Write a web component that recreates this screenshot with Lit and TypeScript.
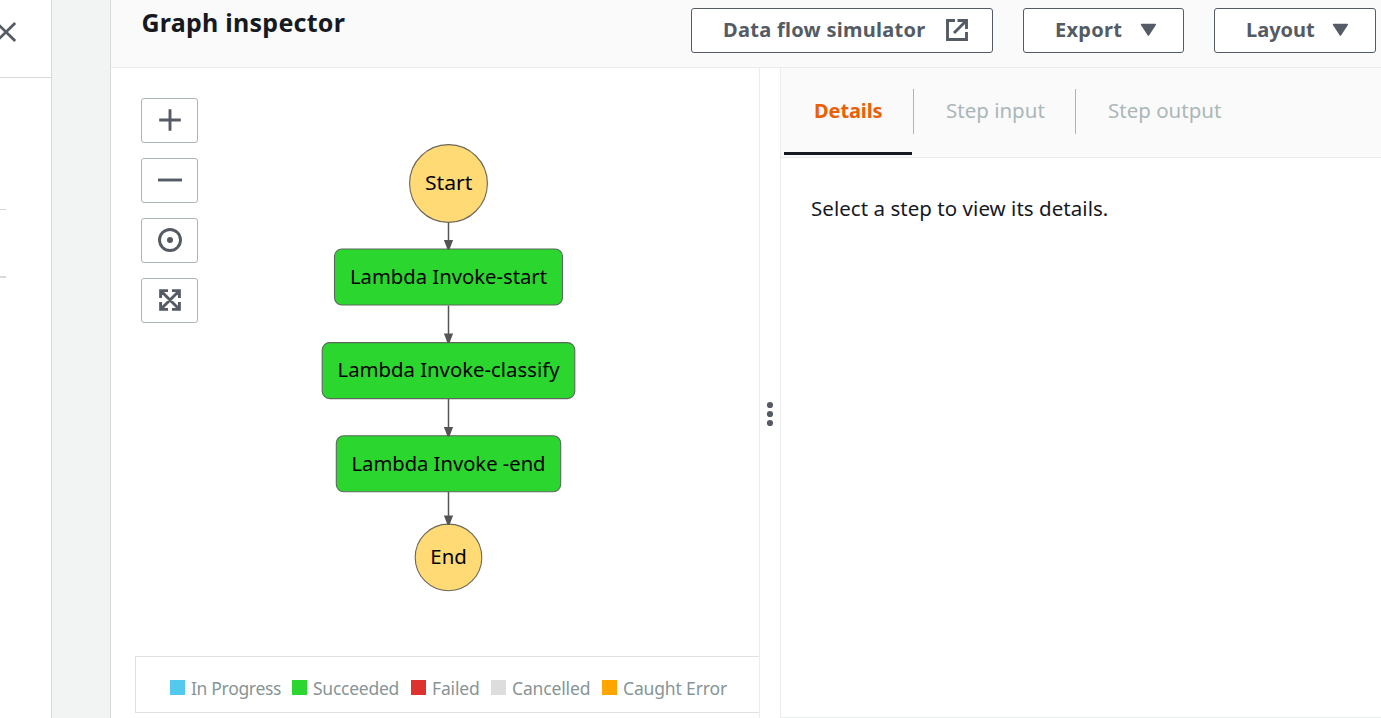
import { LitElement, html, css, svg } from "lit";
import { customElement } from "lit/decorators.js";

interface StepNode { label: string; x: number; y: number; w: number; tx: number; ty: number; tw: number }

const STEPS: StepNode[] = [
  { label: "Lambda Invoke-start", x: 334.5, y: 249, w: 228, tx: 350, ty: 284, tw: 197 },
  { label: "Lambda Invoke-classify", x: 322.2, y: 342.6, w: 252.6, tx: 337.5, ty: 377, tw: 222 },
  { label: "Lambda Invoke -end", x: 336.3, y: 435.8, w: 224.4, tx: 351.5, ty: 471, tw: 194 },
];

const LINKS = [[222.5, 249], [305.5, 342.6], [399, 436], [492, 524.5]];

const LEGEND = [
  { label: "In Progress", cls: "progress" },
  { label: "Succeeded", cls: "ok" },
  { label: "Failed", cls: "failed" },
  { label: "Cancelled", cls: "cancelled" },
  { label: "Caught Error", cls: "caught" },
];

@customElement("state-graph")
class StateGraph extends LitElement {
  static styles = css`
    :host { display: block; }
    svg { display: block; }
    .terminal { fill: #ffda75; stroke: #6b6759; stroke-width: 1.1; }
    .step { fill: #2bd62e; stroke: #5c685c; stroke-width: 1.1; }
    .link { stroke: #545454; stroke-width: 1.5; }
    .head { fill: #545454; }
    text { font: 20.5px "Noto Sans", sans-serif; fill: #000; }
  `;
  render() {
    return html`<svg width="480" height="480" viewBox="210 130 480 480">
      ${LINKS.map(([a, b]) => svg`
        <line class="link" x1="448.5" x2="448.5" y1=${a} y2=${b - 6}></line>`)}
      <circle class="terminal" cx="448.5" cy="183.5" r="38.9"></circle>
      <text x="425" y="190" textLength="47.5" lengthAdjust="spacingAndGlyphs">Start</text>
      ${STEPS.map((s) => svg`
        <rect class="step" x=${s.x} y=${s.y} width=${s.w} height="56" rx="7.5"></rect>
        <text x=${s.tx} y=${s.ty} textLength=${s.tw} lengthAdjust="spacingAndGlyphs">${s.label}</text>`)}
      <circle class="terminal" cx="448.5" cy="557.4" r="33.3"></circle>
      <text x="430.3" y="564" textLength="36.5" lengthAdjust="spacingAndGlyphs">End</text>
      ${LINKS.map(([, b]) => svg`
        <path class="head" d="M443.9 ${b - 9}h9.2l-3.6 9.4h-2z"></path>`)}
    </svg>`;
  }
}

@customElement("app-root")
class AppRoot extends LitElement {
  static styles = css`
    :host {
      display: flex; width: 100%; height: 718px; overflow: hidden; background: #fff;
      font-family: "Noto Sans", sans-serif; color: #16191f; white-space: nowrap;
    }
    * { box-sizing: border-box; }
    svg { display: block; flex: none; }
    .side { width: 52px; border-right: 1px solid #d5dbdb; flex: none; }
    .side-head { height: 78px; border-bottom: 1px solid #d5dbdb; padding-top: 22px; }
    .rule { width: 6px; height: 1px; background: #d5dbdb; margin-top: 131px; }
    .rule.thick { height: 2px; margin-top: 66px; }
    .gutter { width: 58px; background: #f2f3f3; flex: none; }
    .panel { flex: 1; min-width: 0; border-left: 1px solid #d5dbdb; display: flex; flex-direction: column; }
    .head {
      height: 68px; flex: none; background: #fafafa; border-bottom: 1px solid #eaeded;
      display: flex; align-items: flex-start; padding: 8px 5px 0 30.5px;
    }
    h2 { margin: -5px 0 0; font-size: 25px; line-height: 38px; font-weight: 700; letter-spacing: 0.25px; flex: 1; }
    .btn {
      height: 45px; border: 1px solid #545b64; border-radius: 3px; background: #fff; color: #545b64;
      display: flex; align-items: center; font-size: 20px; font-weight: 700; line-height: 30px;
      justify-content: space-between; padding: 0 24px 1px 31px; flex: none;
    }
    .sim { width: 302px; letter-spacing: 0.28px; }
    .exp { width: 161px; margin-left: 30px; padding-right: 26px; letter-spacing: 0.3px; }
    .lay { width: 162px; margin-left: 30px; padding-right: 26px; }
    .body { flex: 1; display: flex; min-height: 0; }
    .canvas {
      width: 649px; flex: none; border-right: 1px solid #eaeded;
      display: flex; flex-direction: column; justify-content: space-between; padding: 30px 0 5px 24px;
    }
    .work { display: flex; padding-left: 6px; }
    .tools { display: flex; flex-direction: column; gap: 15px; width: 57px; }
    .tool {
      width: 57px; height: 45px; border: 1px solid #aab7b8; border-radius: 3px;
      display: flex; align-items: center; justify-content: center; padding-bottom: 1px;
    }
    .graph { padding: 32px 0 0 12px; }
    .legend {
      height: 57px; border: 1px solid #e0e0e0; border-right: 0; padding: 7px 0 0 34px;
      display: flex; align-items: center; font-size: 17.5px; line-height: 24px; color: #879596;
      letter-spacing: -0.15px;
    }
    .item { display: flex; align-items: center; flex: none; }
    .item.progress { width: 122px; letter-spacing: -0.32px; }
    .item.ok { width: 119px; letter-spacing: -0.25px; }
    .item.failed { width: 80px; }
    .item.cancelled { width: 111px; }
    .swatch { width: 15px; height: 15px; margin-right: 6px; margin-top: -2px; flex: none; }
    .progress .swatch { background: #53c9ed; }
    .ok .swatch { background: #2bd62e; }
    .failed .swatch { background: #de322f; }
    .cancelled .swatch { background: #ddd; }
    .caught .swatch { background: #ffa500; }
    .splitter { width: 20px; flex: none; display: flex; align-items: center; justify-content: center; padding-top: 42px; }
    .details { flex: 1; border-left: 1px solid #eaeded; border-bottom: 1px solid #eaeded; }
    .tabs {
      height: 90px; background: #fafafa; border-bottom: 1px solid #eaeded; display: flex;
      padding-left: 3px; font-size: 20.5px; line-height: 30px; color: #aab7b8;
    }
    .tab { height: 87px; padding: 27px 0 0 30px; width: 128px; }
    .tab.active { padding-top: 28px; color: #eb5f07; font-weight: 700; font-size: 20px; border-bottom: 3px solid #16191f; letter-spacing: -0.1px; }
    .tab.input { width: 161px; padding-left: 32px; }
    .tab.output { width: 180px; padding-left: 32px; }
    .bar { width: 1px; height: 45px; margin-top: 21px; background: #aab7b8; }
    .bar.first { margin-left: 1px; }
    .message { padding: 35px 0 0 30px; font-size: 20.5px; line-height: 30px; letter-spacing: 0.04px; }
  `;

  caret() {
    return html`<svg width="17" height="14" viewBox="0 0 17 14"><path d="M1.5 1.5h13.8L8.4 12.2z" fill="#545b64" stroke="#545b64" stroke-width="1.4" stroke-linejoin="round"/></svg>`;
  }

  render() {
    return html`
      <div class="side">
        <div class="side-head">
          <svg width="18" height="20" viewBox="0 0 18 20"><path d="M-3.2 1l18.4 18M15.2 1L-3.2 19" stroke="#545b64" stroke-width="2.8" fill="none"/></svg>
        </div>
        <div class="rule"></div>
        <div class="rule thick"></div>
      </div>
      <div class="gutter"></div>
      <div class="panel">
        <div class="head">
          <h2>Graph inspector</h2>
          <div class="btn sim"><span>Data flow simulator</span>
            <svg width="22" height="22" viewBox="0 0 22 22" fill="none" stroke="#545b64" stroke-width="2.9"><path d="M9 1.5H1.5v19h19V13M11.5 1.5h9V10M20 2L8 14"/></svg>
          </div>
          <div class="btn exp"><span>Export</span>${this.caret()}</div>
          <div class="btn lay"><span>Layout</span>${this.caret()}</div>
        </div>
        <div class="body">
          <div class="canvas">
            <div class="work">
              <div class="tools">
                <div class="tool"><svg width="24" height="24" viewBox="0 0 24 24"><path d="M1.2 12h21.6M12 1.2v21.6" stroke="#545b64" stroke-width="2.9"/></svg></div>
                <div class="tool"><svg width="24" height="24" viewBox="0 0 24 24"><path d="M0 12h24" stroke="#545b64" stroke-width="2.9"/></svg></div>
                <div class="tool"><svg width="24" height="24" viewBox="0 0 24 24"><circle cx="12" cy="12" r="10.5" fill="none" stroke="#545b64" stroke-width="2.9"/><circle cx="12" cy="12" r="3" fill="#545b64"/></svg></div>
                <div class="tool"><svg width="24" height="24" viewBox="0 0 24 24" fill="none" stroke="#545b64" stroke-width="2.9"><path d="M3 3l18 18M21 3L3 21M2.6 10V2.6H10M14 2.6h7.4V10M21.4 14v7.4H14M10 21.4H2.6V14"/></svg></div>
              </div>
              <div class="graph"><state-graph></state-graph></div>
            </div>
            <div class="legend">
              ${LEGEND.map((l) => html`<div class="item ${l.cls}"><span class="swatch"></span><span>${l.label}</span></div>`)}
            </div>
          </div>
          <div class="splitter">
            <svg width="8" height="26" viewBox="0 0 8 26" fill="#545b64"><circle cx="4" cy="4" r="3.1"/><circle cx="4" cy="13" r="3.1"/><circle cx="4" cy="22" r="3.1"/></svg>
          </div>
          <div class="details">
            <div class="tabs">
              <div class="tab active">Details</div>
              <div class="bar first"></div>
              <div class="tab input">Step input</div>
              <div class="bar"></div>
              <div class="tab output">Step output</div>
            </div>
            <div class="message">Select a step to view its details.</div>
          </div>
        </div>
      </div>`;
  }
}
